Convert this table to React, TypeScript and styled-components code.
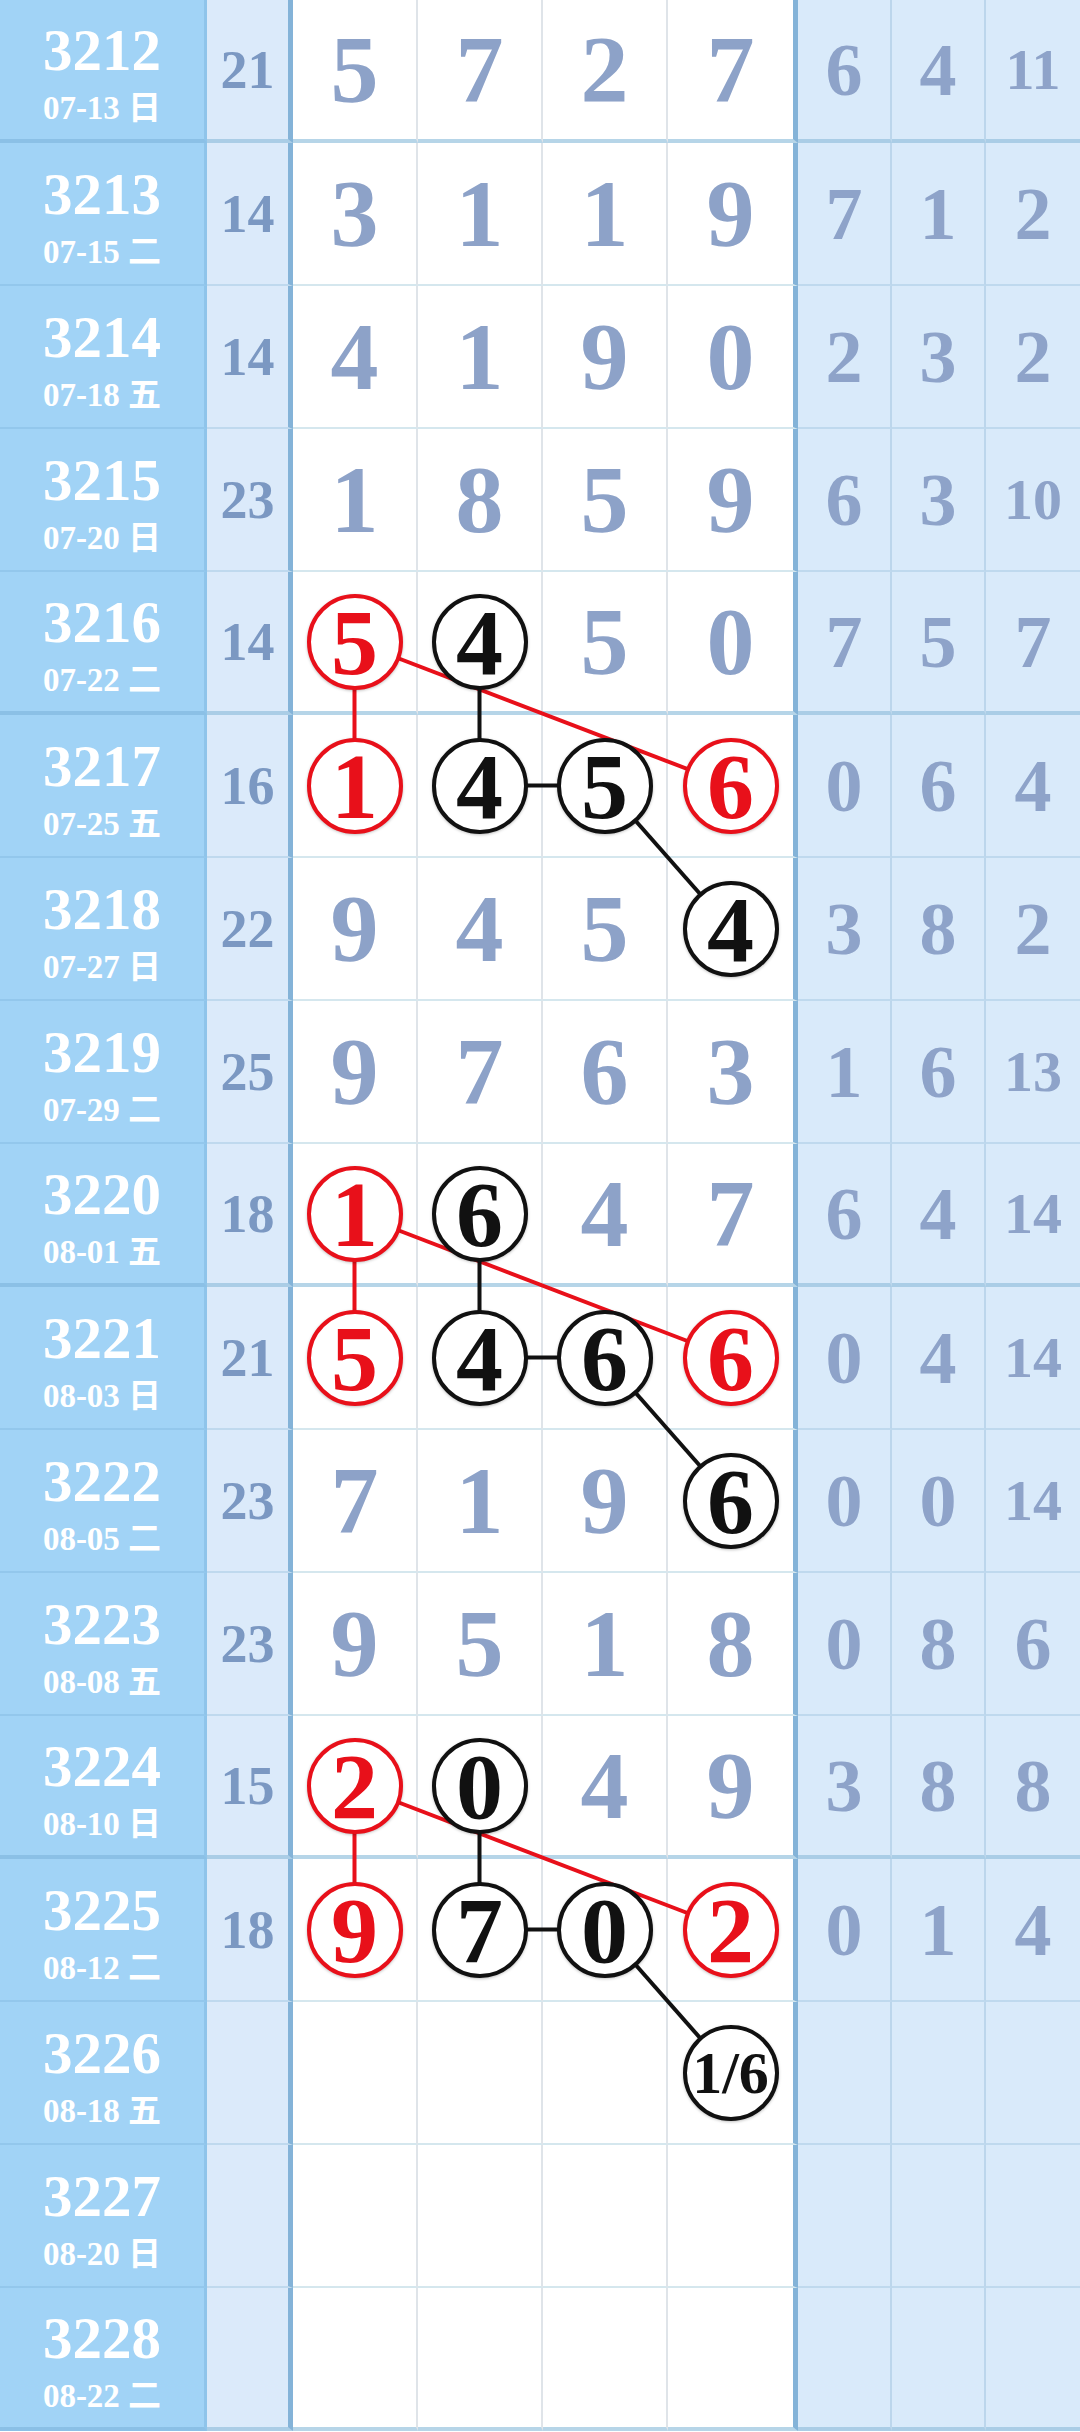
import React from "react";
import styled, { createGlobalStyle } from "styled-components";

const GlobalStyle = createGlobalStyle`
  html, body { margin: 0; padding: 0; background: #fff; }
  body { font-family: "Liberation Serif", "Noto Sans CJK SC", serif; }
`;

const ROW_H = 143;
const SERIF = `"Liberation Serif", "Noto Sans CJK SC", serif`;

type Rec = { p: string; d: string; s?: number; n?: (number | string | null)[]; r?: number[] };

const rows: Rec[] = [
  { p: "3212", d: "07-13 日", s: 21, n: [5, 7, 2, 7], r: [6, 4, 11] },
  { p: "3213", d: "07-15 二", s: 14, n: [3, 1, 1, 9], r: [7, 1, 2] },
  { p: "3214", d: "07-18 五", s: 14, n: [4, 1, 9, 0], r: [2, 3, 2] },
  { p: "3215", d: "07-20 日", s: 23, n: [1, 8, 5, 9], r: [6, 3, 10] },
  { p: "3216", d: "07-22 二", s: 14, n: [5, 4, 5, 0], r: [7, 5, 7] },
  { p: "3217", d: "07-25 五", s: 16, n: [1, 4, 5, 6], r: [0, 6, 4] },
  { p: "3218", d: "07-27 日", s: 22, n: [9, 4, 5, 4], r: [3, 8, 2] },
  { p: "3219", d: "07-29 二", s: 25, n: [9, 7, 6, 3], r: [1, 6, 13] },
  { p: "3220", d: "08-01 五", s: 18, n: [1, 6, 4, 7], r: [6, 4, 14] },
  { p: "3221", d: "08-03 日", s: 21, n: [5, 4, 6, 6], r: [0, 4, 14] },
  { p: "3222", d: "08-05 二", s: 23, n: [7, 1, 9, 6], r: [0, 0, 14] },
  { p: "3223", d: "08-08 五", s: 23, n: [9, 5, 1, 8], r: [0, 8, 6] },
  { p: "3224", d: "08-10 日", s: 15, n: [2, 0, 4, 9], r: [3, 8, 8] },
  { p: "3225", d: "08-12 二", s: 18, n: [9, 7, 0, 2], r: [0, 1, 4] },
  { p: "3226", d: "08-18 五", n: [null, null, null, "1/6"] },
  { p: "3227", d: "08-20 日" },
  { p: "3228", d: "08-22 二" },
];

const RED = "#e8101a";
const BLACK = "#111111";

// circled numbers, "row-col"
const marks: Record<string, "red" | "black"> = {};
const links: { a: [number, number]; b: [number, number]; color: string }[] = [];
[4, 8, 12].forEach((g) => {
  marks[`${g}-0`] = "red";
  marks[`${g + 1}-0`] = "red";
  marks[`${g + 1}-3`] = "red";
  marks[`${g}-1`] = "black";
  marks[`${g + 1}-1`] = "black";
  marks[`${g + 1}-2`] = "black";
  marks[`${g + 2}-3`] = "black";
  links.push({ a: [g, 0], b: [g + 1, 0], color: RED });
  links.push({ a: [g, 0], b: [g + 1, 3], color: RED });
  links.push({ a: [g, 1], b: [g + 1, 1], color: BLACK });
  links.push({ a: [g + 1, 1], b: [g + 1, 2], color: BLACK });
  links.push({ a: [g + 1, 2], b: [g + 2, 3], color: BLACK });
});

const isThick = (r: number) => r % 4 === 0;
const cx = (c: number) => (c < 3 ? 293 + 125 * c + 61.5 : 730.5);
const cy = (r: number) => ROW_H * r + (ROW_H - (isThick(r) ? 4 : 2)) / 2;

const Table = styled.div`
  position: relative;
  width: 1080px;
`;

const Row = styled.div`
  display: grid;
  grid-template-columns: 207px 86px repeat(3, 125px) 130px repeat(3, 94px);
  height: ${ROW_H}px;
`;

const Cell = styled.div<{ $thick: boolean }>`
  box-sizing: border-box;
  display: flex;
  align-items: center;
  justify-content: center;
  font-family: ${SERIF};
  font-weight: bold;
  line-height: 1;
`;

const PeriodCell = styled(Cell)`
  flex-direction: column;
  gap: 12px;
  padding-top: 6px;
  background: #a1d3f6;
  color: #ffffff;
  border-right: 3px solid #8fc4ea;
  border-bottom: ${(p) => (p.$thick ? "4px solid #8bc0e6" : "2px solid #93c7ec")};
`;

const PeriodNo = styled.div`
  font-size: 59px;
`;

const PeriodDate = styled.div`
  font-size: 33px;
  white-space: nowrap;
`;

const SumCell = styled(Cell)`
  background: #dbeafa;
  color: #7b98c2;
  font-size: 54px;
  border-right: 5px solid #84b3d8;
  border-bottom: ${(p) => (p.$thick ? "4px solid #aacde6" : "2px solid #bfd9ee")};
`;

const DigitCell = styled(Cell)<{ $last: boolean }>`
  background: #ffffff;
  color: #8da2c8;
  font-size: 96px;
  border-right: ${(p) => (p.$last ? "5px solid #84b3d8" : "2px solid #dfe4e9")};
  border-bottom: ${(p) => (p.$thick ? "4px solid #b6d5e8" : "2px solid #d5e7ee")};
`;

const SideCell = styled(Cell)<{ $last: boolean; $small: boolean }>`
  background: #d9eafa;
  color: #8ea3c9;
  font-size: ${(p) => (p.$small ? "58px" : "74px")};
  border-right: ${(p) => (p.$last ? "none" : "2px solid #bcd6ec")};
  border-bottom: ${(p) => (p.$thick ? "4px solid #aacde6" : "2px solid #bfd9ee")};
`;

const Ball = styled.div<{ $color: string; $small?: boolean }>`
  position: relative;
  z-index: 2;
  box-sizing: border-box;
  width: 96px;
  height: 96px;
  border-radius: 50%;
  border: 4px solid ${(p) => p.$color};
  background: #ffffff;
  color: ${(p) => p.$color};
  display: flex;
  align-items: center;
  justify-content: center;
  font-size: ${(p) => (p.$small ? "60px" : "94px")};
  box-shadow: 0 1px 3px rgba(0, 0, 0, 0.25);
`;

const Links = styled.svg`
  position: absolute;
  left: 0;
  top: 0;
  z-index: 1;
  pointer-events: none;
`;

export default function App() {
  return (
    <>
      <GlobalStyle />
      <Table>
        {rows.map((row, ri) => {
          const thick = isThick(ri);
          return (
            <Row key={row.p}>
              <PeriodCell $thick={thick}>
                <PeriodNo>{row.p}</PeriodNo>
                <PeriodDate>{row.d}</PeriodDate>
              </PeriodCell>
              <SumCell $thick={thick}>{row.s ?? ""}</SumCell>
              {[0, 1, 2, 3].map((c) => {
                const v = row.n ? row.n[c] : null;
                const m = marks[`${ri}-${c}`];
                return (
                  <DigitCell key={c} $thick={thick} $last={c === 3}>
                    {m ? (
                      <Ball $color={m === "red" ? RED : BLACK} $small={typeof v === "string"}>
                        {v}
                      </Ball>
                    ) : (
                      v ?? ""
                    )}
                  </DigitCell>
                );
              })}
              {[0, 1, 2].map((c) => {
                const v = row.r ? row.r[c] : undefined;
                return (
                  <SideCell key={c} $thick={thick} $last={c === 2} $small={v !== undefined && v > 9}>
                    {v ?? ""}
                  </SideCell>
                );
              })}
            </Row>
          );
        })}
        <Links width={1080} height={ROW_H * rows.length}>
          {links.map((l, i) => (
            <line
              key={i}
              x1={cx(l.a[1])}
              y1={cy(l.a[0])}
              x2={cx(l.b[1])}
              y2={cy(l.b[0])}
              stroke={l.color}
              strokeWidth={4}
            />
          ))}
        </Links>
      </Table>
    </>
  );
}
